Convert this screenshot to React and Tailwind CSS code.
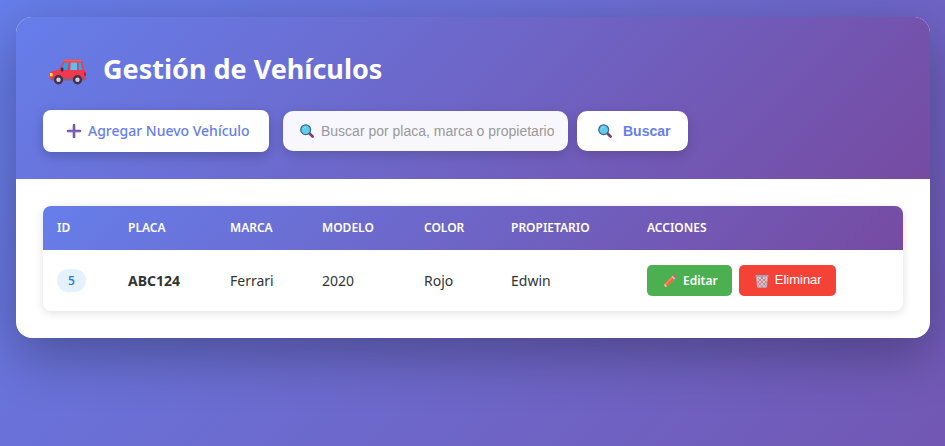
import React from "react";

const vehicles = [
  { id: 5, plate: "ABC124", brand: "Ferrari", model: "2020", color: "Rojo", owner: "Edwin" },
];

function CarIcon() {
  return (
    <svg width="38" height="26" viewBox="0 0 38 26" aria-hidden="true" className="mt-1.5 shrink-0">
      <path d="M1 14.500 Q1 12.500 4.500 12 L10.500 10.600 L14 3 Q15 .8 17 .8 L31 .8 Q32.800 .8 33.300 3 L35 11 Q37 12 37 14 L37 19 Q37 21 35 21 L3.500 21 Q1 21 1 18.500 Z" fill="#ee3a4c" />
      <path d="M1.500 18.800 H37 Q37 21.500 34.500 21.500 H3.500 Q1.500 21 1.500 18.800Z" fill="#9c5a73" />
      <path d="M15 .8 H31 Q32.500 .9 33 2.400 H14.300 Q14.600 1.200 15 .8Z" fill="#ff5a50" />
      <path d="M11.500 10.900 L15.200 4.200 Q15.700 3.400 16.600 3.400 H19.800 L18.300 10.900 Z" fill="#2f9fee" />
      <path d="M21.800 3.400 H28 V10.900 H21.200 Z" fill="#62bdf5" />
      <path d="M29.600 3.400 H31.800 L33.300 10.900 H29.600 Z" fill="#37a4ee" />
      <rect x="11.800" y="8.500" width="2.600" height="4" rx="1.100" fill="#3b2b57" />
      <path d="M1 14 H3.200 Q4.200 15.500 3.500 17.300 H1Z" fill="#ffd53d" />
      <path d="M35 13.500 H37 V17 H35Z" fill="#c4145c" />
      <circle cx="9.500" cy="20.700" r="4.700" fill="#40334f" />
      <circle cx="9.500" cy="20.700" r="2.200" fill="#d9cde4" />
      <circle cx="28.500" cy="20.700" r="4.700" fill="#40334f" />
      <circle cx="28.500" cy="20.700" r="2.200" fill="#d9cde4" />
    </svg>
  );
}

function PlusIcon() {
  return (
    <svg width="16" height="16" viewBox="0 0 16 16" aria-hidden="true" className="shrink-0">
      <path d="M8 2 V14 M2 8 H14" stroke="#7358a6" strokeWidth="2.600" strokeLinecap="round" />
      <path d="M2 8.600 H14" stroke="#8b66d0" strokeWidth="1" strokeLinecap="round" />
    </svg>
  );
}

function SearchIcon({ className = "" }) {
  return (
    <svg width="16" height="16" viewBox="0 0 16 16" aria-hidden="true" className={"shrink-0 " + className}>
      <path d="M10.500 10.500 L13.600 13.400" stroke="#7b3f78" strokeWidth="2.800" strokeLinecap="round" />
      <circle cx="6.700" cy="6.700" r="4.900" fill="#5fcdea" stroke="#3f6a94" strokeWidth="1.300" />
      <path d="M4.200 5.800 Q4.800 4.300 6.400 4" stroke="#8fe3fb" strokeWidth="1" fill="none" strokeLinecap="round" />
    </svg>
  );
}

function PencilIcon() {
  return (
    <svg width="14" height="14" viewBox="0 0 14 14" aria-hidden="true" className="shrink-0">
      <path d="M.5 13.500 L1.800 9.600 L4.500 12.200 Z" fill="#f3c79c" />
      <path d="M.5 13.500 L1 12 L2 13 Z" fill="#4a3940" />
      <path d="M1.800 9.600 L8.600 2.800 L11.300 5.400 L4.500 12.200 Z" fill="#ff8148" />
      <path d="M3.200 10.900 L9.900 4.100 L11.300 5.400 L4.500 12.200 Z" fill="#ea6a4b" />
      <path d="M8.600 2.800 L9.700 1.700 L12.400 4.300 L11.300 5.400 Z" fill="#d5cfe0" />
      <path d="M9.700 1.700 L10.500 .9 Q11.300 .2 12.200 1 L13.200 2 Q13.800 2.800 13.100 3.600 L12.400 4.300 Z" fill="#f2506b" />
    </svg>
  );
}

function TrashIcon() {
  return (
    <svg width="14" height="14" viewBox="0 0 14 14" aria-hidden="true" className="shrink-0">
      <path d="M1.500 2.500 H12.500 L11.500 13.200 H2.500 Z" fill="#d3c8d2" />
      <path d="M3 4 L11 12 M6 3 L12 9 M2.500 7.500 L7.500 13 M11 4 L3 12 M8 3 L2.500 8.500 M11.500 7.500 L6.500 13" stroke="#d8606a" strokeWidth=".7" />
      <path d="M1.500 2.500 L2.500 13.200 H11.500 L12.500 2.500" stroke="#b3a9b8" strokeWidth="1" fill="none" />
      <rect x=".5" y="1" width="13" height="2" rx=".6" fill="#aaa3b5" />
    </svg>
  );
}

export default function App() {
  return (
    <div className="min-h-screen bg-linear-[135deg,#667eea_0%,#764ba2_132%] pt-[17px] pr-[15px] pb-8 pl-4 font-['Segoe_UI','Noto_Sans',sans-serif] text-[#333333]">
      <main className="overflow-hidden rounded-2xl bg-white shadow-[0_18px_54px_rgba(0,0,0,0.3)]">
        <header className="bg-linear-[135deg,#667eea_0%,#764ba2_100%] px-[27px] pt-8 pb-[27px]">
          <h1 className="flex items-center gap-4 pl-1.5 text-[27px] leading-10 font-bold text-white">
            <CarIcon />
            Gestión de Vehículos
          </h1>
          <div className="mt-[21px] flex flex-wrap items-center gap-3.5">
            <button type="button" className="flex h-[42px] w-[226px] items-center gap-1.5 rounded-lg bg-white pl-[23px] text-sm font-medium whitespace-nowrap text-[#667eea] shadow-[0_4px_12px_rgba(0,0,0,0.2)]">
              <PlusIcon />
              Agregar Nuevo Vehículo
            </button>
            <form className="flex items-center gap-[9px]" onSubmit={(e) => e.preventDefault()}>
              <div className="relative">
                <SearchIcon className="absolute top-3 left-4" />
                <input
                  type="text"
                  aria-label="Buscar vehículos"
                  placeholder="Buscar por placa, marca o propietario..."
                  className="block h-10 w-[285px] rounded-[10px] bg-white/95 pr-3.5 pl-[38px] font-['Liberation_Sans',sans-serif] text-sm shadow-[0_4px_12px_rgba(0,0,0,0.15)] outline-none placeholder:text-[#999999]"
                />
              </div>
              <button type="submit" className="flex h-10 items-center gap-2.5 rounded-[10px] bg-white pr-[18px] pl-5 font-['Liberation_Sans',sans-serif] text-sm font-bold text-[#667eea] shadow-[0_4px_12px_rgba(0,0,0,0.15)]">
                <SearchIcon />
                Buscar
              </button>
            </form>
          </div>
        </header>

        <section className="p-[27px]">
          <div className="overflow-hidden rounded-lg shadow-[0_2px_10px_rgba(0,0,0,0.12)]">
            <table className="w-full table-fixed border-collapse text-left">
              <colgroup>
                <col className="w-[71px]" />
                <col className="w-[102px]" />
                <col className="w-[92px]" />
                <col className="w-[102px]" />
                <col className="w-[87px]" />
                <col className="w-[136px]" />
                <col />
              </colgroup>
              <thead className="bg-linear-[135deg,#667eea_0%,#764ba2_100%] text-xs text-white">
                <tr className="h-11">
                  <th scope="col" className="px-3.5 font-semibold">ID</th>
                  <th scope="col" className="px-3.5 font-semibold">PLACA</th>
                  <th scope="col" className="px-3.5 font-semibold">MARCA</th>
                  <th scope="col" className="px-3.5 font-semibold">MODELO</th>
                  <th scope="col" className="px-3.5 font-semibold">COLOR</th>
                  <th scope="col" className="px-3.5 font-semibold">PROPIETARIO</th>
                  <th scope="col" className="px-3.5 font-semibold">ACCIONES</th>
                </tr>
              </thead>
              <tbody className="text-sm">
                {vehicles.map((v) => (
                  <tr key={v.id} className="h-[61px]">
                    <td className="px-3.5">
                      <span className="inline-block rounded-full bg-[#e3f2fd] px-[11px] text-xs leading-[23px] font-medium text-[#1976d2]">{v.id}</span>
                    </td>
                    <td className="px-3.5 font-bold">{v.plate}</td>
                    <td className="px-3.5">{v.brand}</td>
                    <td className="px-3.5">{v.model}</td>
                    <td className="px-3.5">{v.color}</td>
                    <td className="px-3.5">{v.owner}</td>
                    <td className="px-3.5">
                      <div className="flex gap-[7px]">
                        <button type="button" className="flex h-[31px] items-center gap-1.5 rounded-[5px] bg-[#4caf50] pr-3.5 pl-4 text-xs font-semibold text-white">
                          <PencilIcon />
                          Editar
                        </button>
                        <button type="button" className="flex h-[31px] items-center gap-1.5 rounded-[5px] bg-[#f44336] pr-3.5 pl-4 font-['Liberation_Sans',sans-serif] text-[13px] text-white">
                          <TrashIcon />
                          Eliminar
                        </button>
                      </div>
                    </td>
                  </tr>
                ))}
              </tbody>
            </table>
          </div>
        </section>
      </main>
    </div>
  );
}
